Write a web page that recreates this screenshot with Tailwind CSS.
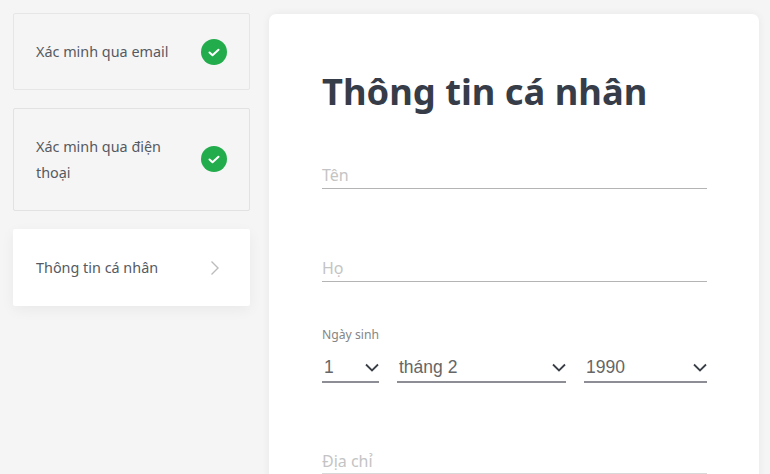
<!DOCTYPE html>
<html lang="vi">
<head>
<meta charset="utf-8">
<script src="https://cdn.jsdelivr.net/npm/@tailwindcss/browser@4"></script>
</head>
<body class="bg-[#f5f5f5] m-0 overflow-hidden font-['Noto_Sans','Open_Sans',sans-serif]">
<div class="w-[770px] h-[474px] overflow-hidden flex items-start gap-[19px] pl-[13px] pt-[13px]">
  <aside class="w-[237px] shrink-0 flex flex-col gap-[18px]">
    <div class="h-[77px] border border-[#e6e6e6] flex items-center justify-between pl-[22px] pr-[22px] rounded-[2px]">
      <span class="text-[14.4px] pt-[1px] text-[#555a62]">Xác minh qua email</span>
      <svg class="w-[26px] h-[26px]" viewBox="0 0 26 26"><circle cx="13" cy="13" r="13" fill="#22ac4c"/><path d="M8.5 13.5l3 2.8 6-5.6" fill="none" stroke="#fff" stroke-width="2" stroke-linecap="round" stroke-linejoin="round"/></svg>
    </div>
    <div class="h-[103px] border border-[#e2e2e2] flex items-center justify-between pl-[22px] pr-[22px] pb-[2px] rounded-[2px]">
      <span class="text-[14.4px] leading-[26px] pt-[2px] text-[#555a62] w-[150px]">Xác minh qua điện thoại</span>
      <svg class="w-[26px] h-[26px]" viewBox="0 0 26 26"><circle cx="13" cy="13" r="13" fill="#22ac4c"/><path d="M8.5 13.5l3 2.8 6-5.6" fill="none" stroke="#fff" stroke-width="2" stroke-linecap="round" stroke-linejoin="round"/></svg>
    </div>
    <div class="h-[77px] bg-white flex items-center justify-between pl-[23px] pr-[30px] rounded-[2px] shadow-[0_4px_14px_rgba(0,0,0,0.05)]">
      <span class="text-[14.4px] text-[#555a62]">Thông tin cá nhân</span>
      <svg class="w-[10px] h-[16px]" viewBox="0 0 10 16"><path d="M1.5 1.5L8 8l-6.5 6.5" fill="none" stroke="#bcbcbc" stroke-width="1.4"/></svg>
    </div>
  </aside>
  <main class="w-[490px] h-[600px] mt-[1px] shrink-0 bg-white rounded-[7px] shadow-[0_0_8px_rgba(0,0,0,0.06)] pl-[53px] pr-[52px] pt-[52px]">
    <h1 class="text-[36.3px] leading-[50px] font-bold text-[#363c48]">Thông tin cá nhân</h1>
    <div class="mt-[46px] h-[27px] border-b border-[#b4b4b4] text-[16px] leading-[27px] text-[#c4c4c4]">Tên</div>
    <div class="mt-[66px] h-[27px] border-b border-[#b4b4b4] text-[16px] leading-[27px] text-[#c4c4c4]">Họ</div>
    <div class="mt-[45px] text-[12.2px] leading-[16px] text-[#858585]">Ngày sinh</div>
    <div class="mt-[10px] flex gap-[18px] font-['Liberation_Sans',sans-serif] text-[17.5px] text-[#666]">
      <div class="w-[57px] h-[30px] border-b-2 border-[#8d8d96] flex items-center justify-between pl-[2px]"><span>1</span><svg class="w-[14px] h-[9px]" viewBox="0 0 14 9"><path d="M1 1.5l6 6 6-6" fill="none" stroke="#3a3f47" stroke-width="1.8"/></svg></div>
      <div class="w-[169px] h-[30px] border-b-2 border-[#8d8d96] flex items-center justify-between pl-[2px]"><span>tháng 2</span><svg class="w-[14px] h-[9px]" viewBox="0 0 14 9"><path d="M1 1.5l6 6 6-6" fill="none" stroke="#3a3f47" stroke-width="1.8"/></svg></div>
      <div class="w-[123px] h-[30px] border-b-2 border-[#8d8d96] flex items-center justify-between pl-[2px]"><span>1990</span><svg class="w-[14px] h-[9px]" viewBox="0 0 14 9"><path d="M1 1.5l6 6 6-6" fill="none" stroke="#3a3f47" stroke-width="1.8"/></svg></div>
    </div>
    <div class="mt-[65px] h-[26px] border-b border-[#d8d8d8] text-[16px] leading-[26px] text-[#c4c4c4]">Địa chỉ</div>
  </main>
</div>
</body>
</html>
